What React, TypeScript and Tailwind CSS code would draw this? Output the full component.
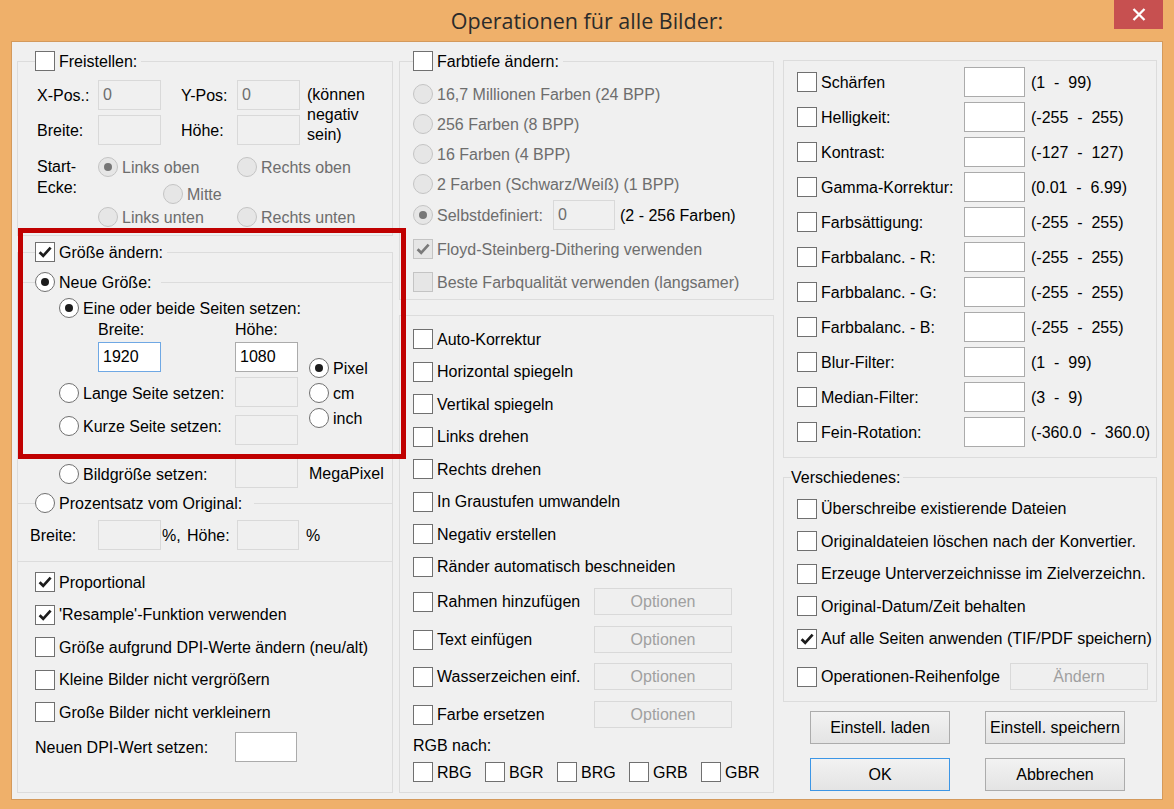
import React from 'react';

type Kids = { children?: React.ReactNode };

const Check = ({ checked = false, disabled = false }: { checked?: boolean; disabled?: boolean }) => (
  <span
    className={`flex h-[20px] w-[20px] shrink-0 items-center justify-center border ${
      disabled ? 'border-[#C4C4C4] bg-[#E6E6E6]' : 'border-[#707070] bg-white'
    }`}
  >
    {checked && (
      <svg width="14" height="14" viewBox="0 0 14 14">
        <path d="M1.6 7.2 L5.2 10.8 L12.6 2.6" fill="none" stroke={disabled ? '#7a7a7a' : '#1c1c1c'} strokeWidth="2.7" />
      </svg>
    )}
  </span>
);

const Radio = ({ checked = false, disabled = false }: { checked?: boolean; disabled?: boolean }) => (
  <span
    className={`flex h-[20px] w-[20px] shrink-0 items-center justify-center rounded-full border ${
      disabled ? 'border-[#C4C4C4] bg-[#E6E6E6]' : 'border-[#707070] bg-white'
    }`}
  >
    {checked && <span className={`h-[8px] w-[8px] rounded-full ${disabled ? 'bg-[#777]' : 'bg-[#1c1c1c]'}`} />}
  </span>
);

const CheckLabel = ({ checked, disabled, children }: Kids & { checked?: boolean; disabled?: boolean }) => (
  <span className="flex h-[20px] items-center">
    <Check checked={checked} disabled={disabled} />
    <span className={`ml-[4px] whitespace-nowrap ${disabled ? 'text-[#6D6D6D]' : 'text-black'}`}>{children}</span>
  </span>
);

const RadioLabel = ({ checked, disabled, children }: Kids & { checked?: boolean; disabled?: boolean }) => (
  <span className="flex h-[20px] items-center">
    <Radio checked={checked} disabled={disabled} />
    <span className={`ml-[4px] whitespace-nowrap ${disabled ? 'text-[#6D6D6D]' : 'text-black'}`}>{children}</span>
  </span>
);

const Field = ({
  value,
  disabled,
  focused,
  className = 'w-[63px] h-[30px]',
}: {
  value?: string;
  disabled?: boolean;
  focused?: boolean;
  className?: string;
}) => (
  <div
    className={`${className} shrink-0 border px-[4px] pt-[4px] ${
      disabled
        ? 'border-[#D9D9D9] bg-[#F0F0F0] text-[#6D6D6D]'
        : focused
        ? 'border-[#6FA8E4] bg-white text-black'
        : 'border-[#ABABAB] bg-white text-black'
    }`}
  >
    {value}
  </div>
);

const Btn = ({ children, disabled, def, className = '' }: Kids & { disabled?: boolean; def?: boolean; className?: string }) => (
  <div
    className={`${className} flex shrink-0 items-center justify-center border ${
      disabled
        ? 'border-[#D9D9D9] bg-[#EFEFEF] text-[#A0A0A0]'
        : def
        ? 'border-[#3C96E6] bg-linear-to-b from-[#F2F2F2] to-[#E4E4E4] text-black'
        : 'border-[#ACACAC] bg-linear-to-b from-[#F2F2F2] to-[#E4E4E4] text-black'
    }`}
  >
    {children}
  </div>
);

const ranges: [string, string][] = [
  ['Schärfen', '(1  -  99)'],
  ['Helligkeit:', '(-255  -  255)'],
  ['Kontrast:', '(-127  -  127)'],
  ['Gamma-Korrektur:', '(0.01  -  6.99)'],
  ['Farbsättigung:', '(-255  -  255)'],
  ['Farbbalanc. - R:', '(-255  -  255)'],
  ['Farbbalanc. - G:', '(-255  -  255)'],
  ['Farbbalanc. - B:', '(-255  -  255)'],
  ['Blur-Filter:', '(1  -  99)'],
  ['Median-Filter:', '(3  -  9)'],
  ['Fein-Rotation:', '(-360.0  -  360.0)'],
];

const transforms = [
  'Auto-Korrektur',
  'Horizontal spiegeln',
  'Vertikal spiegeln',
  'Links drehen',
  'Rechts drehen',
  'In Graustufen umwandeln',
  'Negativ erstellen',
  'Ränder automatisch beschneiden',
];

const LeftColumn = () => (
  <div className="w-[376px] shrink-0">
    {/* Freistellen */}
    <fieldset className="h-[185px] border border-[#DCDCDC]">
      <legend className="ml-[17px] flex items-center pr-[4px]">
        <CheckLabel>Freistellen:</CheckLabel>
      </legend>
      <div className="ml-[19px] mt-[9px] grid grid-cols-[61px_63px_20px_56px_63px_7px_auto] grid-rows-[30px_30px] items-center gap-y-[5px]">
        <span>X-Pos.:</span>
        <Field value="0" disabled />
        <span />
        <span>Y-Pos:</span>
        <Field value="0" disabled />
        <span />
        <span className="row-span-2 mt-[5px] self-start leading-[20px]">
          (können
          <br />
          negativ
          <br />
          sein)
        </span>
        <span>Breite:</span>
        <Field disabled />
        <span />
        <span>Höhe:</span>
        <Field disabled />
        <span />
      </div>
      <div className="ml-[19px] mt-[12px] flex">
        <span className="-mt-[1px] w-[61px] shrink-0 leading-[21px]">
          Start-
          <br />
          Ecke:
        </span>
        <div className="flex flex-col">
          <div className="flex h-[20px]">
            <span className="w-[139px] shrink-0">
              <RadioLabel checked disabled>Links oben</RadioLabel>
            </span>
            <RadioLabel disabled>Rechts oben</RadioLabel>
          </div>
          <div className="mt-[7px] h-[20px] pl-[65px]">
            <RadioLabel disabled>Mitte</RadioLabel>
          </div>
          <div className="mt-[3px] flex h-[20px]">
            <span className="w-[139px] shrink-0">
              <RadioLabel disabled>Links unten</RadioLabel>
            </span>
            <RadioLabel disabled>Rechts unten</RadioLabel>
          </div>
        </div>
      </div>
    </fieldset>

    {/* Größe ändern */}
    <fieldset className="mt-[6px] h-[320px] border border-[#DCDCDC]">
      <legend className="ml-[17px] flex items-center pr-[4px]">
        <CheckLabel checked>Größe ändern:</CheckLabel>
      </legend>
      <fieldset className="mt-[10px] border-t border-[#DCDCDC]">
        <legend className="ml-[17px] flex items-center pr-[10px]">
          <RadioLabel checked>Neue Größe:</RadioLabel>
        </legend>
        <div className="mt-[6px] flex h-[20px] pl-[41px]">
          <RadioLabel checked>Eine oder beide Seiten setzen:</RadioLabel>
        </div>
        <div className="mt-[2px] flex">
          <div className="w-[291px] shrink-0">
            <div className="flex h-[19px] pl-[80px]">
              <span className="w-[137px] shrink-0">Breite:</span>
              <span>Höhe:</span>
            </div>
            <div className="mt-[3px] flex h-[30px] pl-[80px]">
              <Field value="1920" focused />
              <span className="w-[74px] shrink-0" />
              <Field value="1080" />
            </div>
            <div className="mt-[5px] flex h-[30px] items-start">
              <div className="mt-[6px] w-[217px] shrink-0 pl-[41px]">
                <RadioLabel>Lange Seite setzen:</RadioLabel>
              </div>
              <Field disabled />
            </div>
            <div className="mt-[8px] flex h-[30px] items-start">
              <div className="mt-[1px] w-[217px] shrink-0 pl-[41px]">
                <RadioLabel>Kurze Seite setzen:</RadioLabel>
              </div>
              <Field disabled />
            </div>
            <div className="mt-[13px] flex h-[30px] items-start">
              <div className="mt-[6px] w-[217px] shrink-0 pl-[41px]">
                <RadioLabel>Bildgröße setzen:</RadioLabel>
              </div>
              <Field disabled />
              <span className="ml-[11px] shrink-0 self-center whitespace-nowrap">MegaPixel</span>
            </div>
          </div>
          <div className="mt-[38px] flex flex-col gap-[5px]">
            <RadioLabel checked>Pixel</RadioLabel>
            <RadioLabel>cm</RadioLabel>
            <RadioLabel>inch</RadioLabel>
          </div>
        </div>
      </fieldset>
      <fieldset className="mt-[5px] border-t border-[#DCDCDC]">
        <legend className="ml-[17px] flex items-center pr-[12px]">
          <RadioLabel>Prozentsatz vom Original:</RadioLabel>
        </legend>
        <div className="mt-[7px] flex h-[30px] items-center pl-[12px]">
          <span className="w-[68px] shrink-0">Breite:</span>
          <Field disabled />
          <span className="ml-[1px] w-[25px] shrink-0">%,</span>
          <span className="w-[50px] shrink-0">Höhe:</span>
          <Field disabled className="h-[30px] w-[62px]" />
          <span className="ml-[7px]">%</span>
        </div>
      </fieldset>
    </fieldset>

    {/* Optionen unten */}
    <div className="h-[231px] border-x border-b border-[#DCDCDC] pl-[17px] pt-[10px]">
      <div className="flex flex-col gap-[12.5px]">
        <CheckLabel checked>Proportional</CheckLabel>
        <CheckLabel checked>'Resample'-Funktion verwenden</CheckLabel>
        <CheckLabel>Größe aufgrund DPI-Werte ändern (neu/alt)</CheckLabel>
        <CheckLabel>Kleine Bilder nicht vergrößern</CheckLabel>
        <CheckLabel>Große Bilder nicht verkleinern</CheckLabel>
      </div>
      <div className="mt-[10px] flex h-[30px] items-center">
        <span className="w-[200px] shrink-0">Neuen DPI-Wert setzen:</span>
        <Field className="h-[30px] w-[62px]" />
      </div>
    </div>
  </div>
);

const MiddleColumn = () => (
  <div className="ml-[6px] w-[375px] shrink-0">
    <fieldset className="h-[249px] border border-[#DCDCDC]">
      <legend className="ml-[13px] flex items-center pr-[4px]">
        <CheckLabel>Farbtiefe ändern:</CheckLabel>
      </legend>
      <div className="flex flex-col pl-[13px]">
        <div className="mt-[13px]">
          <RadioLabel disabled>16,7 Millionen Farben (24 BPP)</RadioLabel>
        </div>
        <div className="mt-[10px]">
          <RadioLabel disabled>256 Farben (8 BPP)</RadioLabel>
        </div>
        <div className="mt-[10px]">
          <RadioLabel disabled>16 Farben (4 BPP)</RadioLabel>
        </div>
        <div className="mt-[10px]">
          <RadioLabel disabled>2 Farben (Schwarz/Weiß) (1 BPP)</RadioLabel>
        </div>
        <div className="mt-[6px] flex h-[30px] items-center">
          <span className="w-[140px] shrink-0">
            <RadioLabel checked disabled>Selbstdefiniert:</RadioLabel>
          </span>
          <Field value="0" disabled className="h-[30px] w-[62px]" />
          <span className="ml-[5px]">(2 - 256 Farben)</span>
        </div>
        <div className="mt-[9px]">
          <CheckLabel checked disabled>Floyd-Steinberg-Dithering verwenden</CheckLabel>
        </div>
        <div className="mt-[13px]">
          <CheckLabel disabled>Beste Farbqualität verwenden (langsamer)</CheckLabel>
        </div>
      </div>
    </fieldset>

    <div className="mt-[15px] h-[478px] border border-[#DCDCDC] pl-[13px] pt-[13px]">
      <div className="flex flex-col gap-[12.5px]">
        {transforms.map((t) => (
          <CheckLabel key={t}>{t}</CheckLabel>
        ))}
      </div>
      {[
        ['Rahmen hinzufügen', 'mt-[11.5px]'],
        ['Text einfügen', 'mt-[11px]'],
        ['Wasserzeichen einf.', 'mt-[10px]'],
        ['Farbe ersetzen', 'mt-[11px]'],
      ].map(([label, mt]) => (
        <div key={label} className={`${mt} flex h-[27px] items-center`}>
          <span className="w-[181px] shrink-0">
            <CheckLabel>{label}</CheckLabel>
          </span>
          <Btn disabled className="h-[27px] w-[138px]">
            Optionen
          </Btn>
        </div>
      ))}
      <div className="mt-[7.5px]">RGB nach:</div>
      <div className="mt-[7.5px] flex">
        {['RBG', 'BGR', 'BRG', 'GRB', 'GBR'].map((c) => (
          <span key={c} className="w-[72px] shrink-0">
            <CheckLabel>{c}</CheckLabel>
          </span>
        ))}
      </div>
    </div>
  </div>
);

const RightColumn = () => (
  <div className="ml-[9px] w-[374px] shrink-0">
    <div className="mt-[9px] h-[398px] border border-[#DCDCDC] pl-[13px] pt-[6px]">
      <div className="flex flex-col gap-[5px]">
        {ranges.map(([label, range]) => (
          <div key={label} className="flex h-[30px] items-center">
            <span className="w-[167px] shrink-0">
              <CheckLabel>{label}</CheckLabel>
            </span>
            <Field className="h-[30px] w-[61px]" />
            <span className="ml-[6px] whitespace-pre">{range}</span>
          </div>
        ))}
      </div>
    </div>

    <fieldset className="mt-[10px] h-[234px] border border-[#DCDCDC]">
      <legend className="ml-[7px] pr-[3px] leading-[19px]">Verschiedenes:</legend>
      <div className="mt-[11.5px] flex flex-col gap-[12.5px] pl-[13px]">
        <CheckLabel>Überschreibe existierende Dateien</CheckLabel>
        <CheckLabel>Originaldateien löschen nach der Konvertier.</CheckLabel>
        <CheckLabel>Erzeuge Unterverzeichnisse im Zielverzeichn.</CheckLabel>
        <CheckLabel>Original-Datum/Zeit behalten</CheckLabel>
        <CheckLabel checked>Auf alle Seiten anwenden (TIF/PDF speichern)</CheckLabel>
      </div>
      <div className="mt-[14.5px] flex h-[27px] items-center pl-[13px]">
        <span className="w-[213px] shrink-0">
          <CheckLabel>Operationen-Reihenfolge</CheckLabel>
        </span>
        <Btn disabled className="h-[27px] w-[138px]">
          Ändern
        </Btn>
      </div>
    </fieldset>

    <div className="mt-[9px] flex gap-[35px] pl-[27px]">
      <Btn className="h-[33px] w-[140px]">Einstell. laden</Btn>
      <Btn className="h-[33px] w-[140px]">Einstell. speichern</Btn>
    </div>
    <div className="mt-[14px] flex gap-[35px] pl-[27px]">
      <Btn def className="h-[33px] w-[140px]">
        OK
      </Btn>
      <Btn className="h-[33px] w-[140px]">Abbrechen</Btn>
    </div>
  </div>
);

export default function App() {
  return (
    <div className="relative h-[809px] w-[1174px] overflow-hidden bg-[#EFB06A] font-['Liberation_Sans',Arial,sans-serif] text-[16px] leading-[19px] text-black">
      {/* title bar */}
      <div className="flex h-[41px]">
        <div className="flex-1" />
        <div className="flex items-center font-['Open_Sans','Noto_Sans',sans-serif] text-[21.5px] text-[#2B2B2B]">
          Operationen für alle Bilder:
        </div>
        <div className="flex flex-1 justify-end">
          <div className="mr-[11px] flex h-[29px] w-[49px] items-center justify-center bg-[#C75050]">
            <svg width="14" height="13" viewBox="0 0 14 13">
              <path d="M1.5 1 L12.5 12 M12.5 1 L1.5 12" stroke="white" strokeWidth="2.3" />
            </svg>
          </div>
        </div>
      </div>

      {/* client area */}
      <div className="ml-[11px] flex h-[759px] w-[1152px] items-start border border-[#D49A5C] bg-[#F0F0F0] pl-[5px] pt-[9px]">
        <LeftColumn />
        <MiddleColumn />
        <RightColumn />
      </div>

      {/* red highlight annotation */}
      <div className="pointer-events-none absolute left-[18px] top-[228px] h-[231px] w-[388px] border-[5px] border-[#C00000]" />
    </div>
  );
}
